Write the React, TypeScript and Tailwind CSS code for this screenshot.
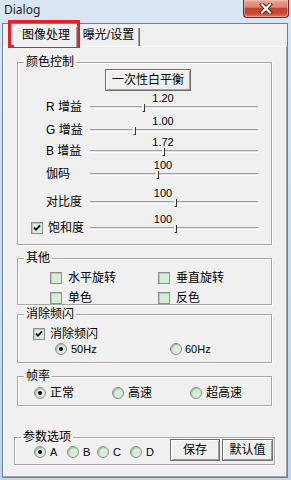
import type { ReactNode } from 'react'

function CheckBox({ checked = false }: { checked?: boolean }) {
  return (
    <span className="flex h-[12px] w-[12px] shrink-0 items-center justify-center border border-[#8e8f8f] bg-[#d5eed5] shadow-[inset_1px_1px_0_#b9c9b9]">
      {checked && (
        <svg width="8" height="8" viewBox="0 0 8 8">
          <path d="M1 3.6 L3 5.8 L7 1.4" stroke="#000" strokeWidth="1.7" fill="none" />
        </svg>
      )}
    </span>
  )
}

function Radio({ checked = false }: { checked?: boolean }) {
  return (
    <span className="flex h-[12px] w-[12px] shrink-0 items-center justify-center rounded-full border border-[#8e8f8f] bg-[#d5eed5] shadow-[inset_1px_1px_1px_#a8b8a8]">
      {checked && <span className="h-[4px] w-[4px] rounded-full bg-black" />}
    </span>
  )
}

function Btn({ children, className = '' }: { children: ReactNode; className?: string }) {
  return (
    <button
      type="button"
      className={`flex h-[22px] items-center justify-center border border-[#707070] bg-[#f0f0f0] text-[12px] leading-[14px] shadow-[inset_1px_1px_0_#fff,inset_-1px_-1px_0_#a0a0a0] ${className}`}
    >
      {children}
    </button>
  )
}

function GroupBox({
  label,
  className,
  children,
}: {
  label: string
  className: string
  children: ReactNode
}) {
  return (
    <div className={`relative border border-[#a6a6a6] shadow-[inset_1px_1px_0_#fff,1px_1px_0_#fff] ${className}`}>
      <span className="absolute -top-[8px] left-[6px] bg-[#f0f0f0] px-[2px] text-[12px] leading-[14px]">
        {label}
      </span>
      {children}
    </div>
  )
}

const sliders = [
  { label: 'R 增益', value: '1.20', thumb: 52, gap: 'mt-[1px]' },
  { label: 'G 增益', value: '1.00', thumb: 43, gap: 'mt-[5px]' },
  { label: 'B 增益', value: '1.72', thumb: 72, gap: 'mt-[3px]' },
  { label: '伽码', value: '100', thumb: 66, gap: 'mt-[5px]' },
  { label: '对比度', value: '100', thumb: 84, gap: 'mt-[10px]' },
  { label: '饱和度', value: '100', thumb: 84, gap: 'mt-[8px]', check: true },
]

function SliderRow({
  label,
  value,
  thumb,
  gap,
  check,
}: {
  label: string
  value: string
  thumb: number
  gap: string
  check?: boolean
}) {
  return (
    <div className={gap}>
      <div className="ml-[125px] h-[12px] w-[40px] text-center text-[11px] leading-[12px]">{value}</div>
      <div className="flex h-[6px] items-center">
        <div className="flex w-[72px] items-center">
          {check ? (
            <>
              <span className="ml-[13px]">
                <CheckBox checked />
              </span>
              <span className="ml-[5px] whitespace-nowrap text-[12px] leading-[14px]">{label}</span>
            </>
          ) : (
            <span className="ml-[28px] whitespace-nowrap text-[12px] leading-[14px]">{label}</span>
          )}
        </div>
        <div className="relative h-[3px] w-[168px] border-y border-t-[#a0a0a0] border-b-white bg-[#e2e2e2]">
          {/* thumb */}
          <span
            className="absolute -top-[3px] h-[8px] w-[3px] border-b border-l border-r border-b-[#333] border-l-white border-r-[#333] bg-[#f0f0f0]"
            style={{ left: thumb }}
          />
        </div>
      </div>
    </div>
  )
}

export default function App() {
  return (
    <div className="relative flex h-[480px] w-[291px] flex-col overflow-hidden bg-gradient-to-b from-[#d9e6f4] to-[#c2d5ea] font-['Liberation_Sans','Noto_Sans_CJK_SC',sans-serif] text-black">
      {/* title bar */}
      <div className="flex h-[23px] shrink-0 items-start justify-between">
        <span className="pl-[4px] pt-[2px] font-['Noto_Sans',sans-serif] text-[12px] leading-[16px] text-[#1b1b1b]">
          Dialog
        </span>
        <div className="mr-[2px] flex h-[18px] w-[46px] items-center justify-center rounded-b-[4px] border border-t-0 border-[#7a2a1d] bg-[linear-gradient(to_bottom,#e9a797_0%,#d98572_42%,#c4432c_50%,#c9492f_78%,#d97a62_100%)] shadow-[inset_0_0_0_1px_rgba(255,210,200,0.45)]">
          <svg width="14" height="11" viewBox="0 0 14 11">
            <path d="M3 1.5 L11 9.5 M11 1.5 L3 9.5" stroke="#5a1a10" strokeWidth="4" strokeLinecap="square" />
            <path d="M3 1.5 L11 9.5 M11 1.5 L3 9.5" stroke="#fff" strokeWidth="2.2" strokeLinecap="square" />
          </svg>
        </div>
      </div>

      {/* client area */}
      <div className="ml-[2px] h-[455px] w-[286px] border border-[#6f8192] bg-[#f0f0f0]">
        {/* tabs */}
        <div className="flex h-[22px] items-end pl-[11px]">
          <div className="relative z-10 -mb-[1px] flex h-[21px] w-[64px] justify-center border-x border-t border-t-white border-l-white border-r-[#696969] bg-[#f0f0f0] pt-[1px] text-[12px] leading-[14px] shadow-[inset_-1px_0_0_#a0a0a0]">
            图像处理
          </div>
          <div className="flex h-[18px] w-[62px] justify-center border-r border-r-[#696969] text-[12px] leading-[14px] shadow-[inset_-1px_0_0_#a0a0a0]">
            曝光/设置
          </div>
        </div>

        {/* tab page */}
        <div className="h-[431px] border border-t-white border-l-white border-r-[#a0a0a0] border-b-[#a0a0a0]">
          <GroupBox label="颜色控制" className="ml-[13px] mt-[15px] h-[183px] w-[255px]">
            <Btn className="ml-[87px] mt-[6px] w-[86px]">一次性白平衡</Btn>
            {sliders.map((s) => (
              <SliderRow key={s.label} {...s} />
            ))}
          </GroupBox>

          <GroupBox label="其他" className="ml-[13px] mt-[13px] h-[47px] w-[255px]">
            <div className="grid grid-cols-[108px_1fr] gap-y-[8px] pl-[32px] pt-[13px]">
              {['水平旋转', '垂直旋转', '单色', '反色'].map((t) => (
                <div key={t} className="flex h-[12px] items-center">
                  <CheckBox />
                  <span className="ml-[6px] whitespace-nowrap text-[12px] leading-[14px]">{t}</span>
                </div>
              ))}
            </div>
          </GroupBox>

          <GroupBox label="消除频闪" className="ml-[13px] mt-[9px] h-[49px] w-[255px]">
            <div className="pl-[15px] pt-[13px]">
              <div className="flex h-[12px] items-center">
                <CheckBox checked />
                <span className="ml-[5px] text-[12px] leading-[14px]">消除频闪</span>
              </div>
              <div className="mt-[3px] flex pl-[22px]">
                <div className="flex h-[12px] w-[115px] items-center">
                  <Radio checked />
                  <span className="ml-[4px] text-[11px] leading-[12px]">50Hz</span>
                </div>
                <div className="flex h-[12px] items-center">
                  <Radio />
                  <span className="ml-[3px] text-[11px] leading-[12px]">60Hz</span>
                </div>
              </div>
            </div>
          </GroupBox>

          <GroupBox label="帧率" className="ml-[13px] mt-[13px] h-[30px] w-[255px]">
            <div className="flex pl-[16px] pt-[10px]">
              {[
                { t: '正常', on: true },
                { t: '高速', on: false },
                { t: '超高速', on: false },
              ].map((r) => (
                <div key={r.t} className="flex h-[12px] w-[78px] items-center">
                  <Radio checked={r.on} />
                  <span className="ml-[4px] text-[12px] leading-[14px]">{r.t}</span>
                </div>
              ))}
            </div>
          </GroupBox>

          <GroupBox label="参数选项" className="ml-[10px] mt-[31px] h-[28px] w-[261px]">
            <div className="flex items-center pl-[19px] pr-[1px] pt-[1px]">
              <div className="mt-[4px] flex">
                {[
                  { t: 'A', w: 'w-[33px]', on: true },
                  { t: 'B', w: 'w-[30px]', on: false },
                  { t: 'C', w: 'w-[33px]', on: false },
                  { t: 'D', w: 'w-[24px]', on: false },
                ].map((r) => (
                  <div key={r.t} className={`flex h-[12px] items-center ${r.w}`}>
                    <Radio checked={r.on} />
                    <span className="ml-[4px] text-[11px] leading-[12px]">{r.t}</span>
                  </div>
                ))}
              </div>
              <div className="ml-auto flex gap-[2px]">
                <Btn className="w-[50px]">保存</Btn>
                <Btn className="w-[51px]">默认值</Btn>
              </div>
            </div>
          </GroupBox>
        </div>
      </div>

      {/* annotation */}
      <div className="absolute left-[8px] top-[20px] h-[28px] w-[72px] border-[3px] border-[#ed1c24]" />
    </div>
  )
}
